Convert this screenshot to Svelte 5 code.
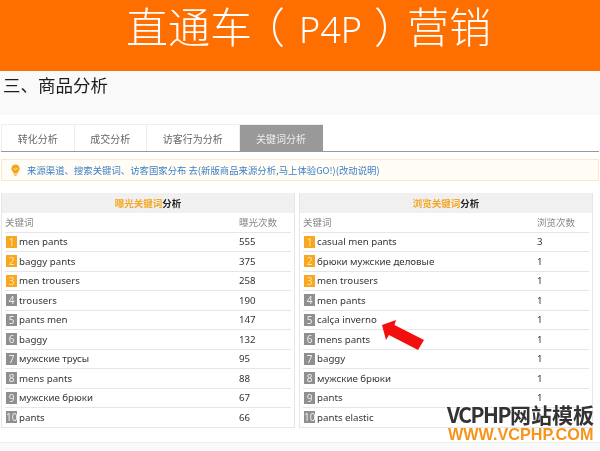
<script>
  const tabs = ['转化分析', '成交分析', '访客行为分析', '关键词分析'];

  const tables = [
    {
      accent: '曝光关键词',
      metric: '曝光次数',
      rows: [
        ['men pants', 555], ['baggy pants', 375], ['men trousers', 258], ['trousers', 190], ['pants men', 147],
        ['baggy', 132], ['мужские трусы', 95], ['mens pants', 88], ['мужские брюки', 67], ['pants', 66]
      ]
    },
    {
      accent: '浏览关键词',
      metric: '浏览次数',
      rows: [
        ['casual men pants', 3], ['брюки мужские деловые', 1], ['men trousers', 1], ['men pants', 1], ['calça inverno', 1],
        ['mens pants', 1], ['baggy', 1], ['мужские брюки', 1], ['pants', 1], ['pants elastic', 1]
      ]
    }
  ];
</script>

<div class="page">
  <header class="banner">直通车<span class="open">（</span><span class="p4p">P4P</span><span class="close">）</span>营销</header>

  <div class="section-title">三、商品分析</div>

  <nav class="tabs">
    {#each tabs as tab, i}
      <div class="tab" class:active={i === 3}>{tab}</div>
    {/each}
  </nav>

  <div class="notice">
    <svg width="9" height="12" viewBox="0 0 10 13">
      <path d="M5 0.5a4.5 4.5 0 0 1 2.6 8.2V10H2.4V8.7A4.5 4.5 0 0 1 5 0.5z" fill="#f8a51c"></path>
      <path d="M3.2 4.6 5 6.4 6.8 4.6" fill="none" stroke="#fff" stroke-width="1"></path>
      <path d="M3 11h4M3.8 12.4h2.4" stroke="#f8a51c" stroke-width="1"></path>
    </svg>
    <span>来源渠道、搜索关键词、访客国家分布 去(新版商品来源分析,马上体验GO!)(改动说明)</span>
  </div>

  <div class="tables">
    {#each tables as table}
      <section class="panel">
        <h3><em>{table.accent}</em>分析</h3>
        <div class="row head">
          <span>关键词</span>
          <span>{table.metric}</span>
        </div>
        {#each table.rows as row, i}
          <div class="row">
            <span class="name"><b class="rank" class:top={i < 3}>{i + 1}</b>{row[0]}</span>
            <span>{row[1]}</span>
          </div>
        {/each}
      </section>
    {/each}
  </div>

  <div class="footer-band"></div>

  <svg class="arrow" width="46" height="34" viewBox="0 0 46 34">
    <path d="M2 7 16 2 14.500 7 44 22 38 32 9 17 6 22z" fill="#f40f0f"></path>
  </svg>

  <div class="watermark">
    <div class="wm-top"><span>VCPHP</span>网站模板</div>
    <div class="wm-url">WWW.VCPHP.COM</div>
  </div>
</div>

<style>
  :global(body) {
    margin: 0;
  }

  .page {
    position: relative;
    width: 600px;
    height: 451px;
    overflow: hidden;
    background: #fff;
    font-family: "Noto Sans", "Noto Sans CJK SC", sans-serif;
    filter: blur(0.35px);
  }

  .banner {
    height: 71px;
    padding-left: 126px;
    box-sizing: border-box;
    background: #ff6f00;
    color: #fff;
    font-family: "Noto Sans CJK SC", sans-serif;
    font-weight: 300;
    font-size: 42px;
    line-height: 50px;
    white-space: nowrap;
  }

  .open {
    margin: 0 9px 0 -9px;
  }

  .close {
    margin: 0 -9px 0 9px;
  }

  .p4p {
    margin: 0 3px 0 5px;
    font-family: "Noto Sans", sans-serif;
    font-size: 36px;
    font-weight: 300;
  }

  .section-title {
    height: 44px;
    padding-left: 3px;
    box-sizing: border-box;
    background: #f9f9f9;
    color: #1c1c1c;
    font-family: "Noto Sans CJK SC", sans-serif;
    font-size: 17.500px;
    line-height: 27px;
  }

  .tabs {
    display: flex;
    height: 27px;
    margin: 9px 1px 0;
    border-bottom: 1px solid #999;
    font-size: 10px;
    color: #666;
  }

  .tab {
    display: flex;
    align-items: center;
    padding: 0 15.750px;
    border: 1px solid #eee;
    border-bottom: 0;
    border-right: 0;
    font-family: "Noto Sans CJK SC", sans-serif;
  }

  .tab.active {
    padding: 0 16.500px;
    background: #999;
    color: #eee;
  }

  .notice {
    display: flex;
    align-items: center;
    gap: 7px;
    height: 22px;
    margin: 7px 1px 0;
    padding-left: 9px;
    background: #fffdf5;
    border: 1px solid #fae9c8;
    box-sizing: border-box;
    color: #3d7fc9;
    font-family: "Noto Sans CJK SC", sans-serif;
    font-size: 9.400px;
    white-space: nowrap;
  }

  .tables {
    display: flex;
    gap: 4px;
    margin: 12px 0 0 1px;
  }

  .panel {
    width: 294px;
    height: 234.500px;
    box-sizing: border-box;
    border: 1px solid #e6e6e6;
    border-top: 0;
    padding: 0 3px;
  }

  h3 {
    height: 20px;
    margin: 0 -3px;
    background: #f0f0f0;
    color: #222;
    font-family: "Noto Sans CJK SC", sans-serif;
    font-size: 9.500px;
    font-weight: 700;
    line-height: 20px;
    text-align: center;
  }

  h3 em {
    font-style: normal;
    color: #f5a623;
  }

  .row {
    display: flex;
    height: 19.500px;
    box-sizing: border-box;
    border-bottom: 1px solid #e6e6e6;
    align-items: center;
    font-size: 9.700px;
    color: #333;
  }

  .row > span:last-child {
    width: 52px;
  }

  .name {
    flex: 1;
    display: flex;
    align-items: center;
    gap: 2px;
    padding-left: 1px;
    white-space: nowrap;
  }

  .row.head {
    color: #888;
    font-family: "Noto Sans CJK SC", sans-serif;
    font-size: 9.500px;
    justify-content: space-between;
  }

  .rank {
    width: 11px;
    height: 12px;
    background: #8f8f8f;
    color: #eee;
    font-weight: 400;
    font-size: 10px;
    line-height: 12px;
    text-align: center;
  }

  .rank.top {
    background: #f7a81e;
    color: #fde3b0;
  }

  .footer-band {
    height: 10px;
    margin-top: 14px;
    background: #f9f9f9;
    border-top: 1px solid #eee;
  }

  .arrow {
    position: absolute;
    left: 380px;
    top: 318px;
  }

  .watermark {
    position: absolute;
    left: 447px;
    top: 402px;
    white-space: nowrap;
  }

  .wm-top {
    font-family: "Noto Sans CJK SC", sans-serif;
    font-weight: 700;
    font-size: 21px;
    line-height: 25px;
    color: #333;
  }

  .wm-top span {
    letter-spacing: -1.500px;
  }

  .wm-url {
    margin: -1px 0 0 1px;
    font-family: "Liberation Sans", sans-serif;
    font-weight: 700;
    font-size: 16.200px;
    line-height: 17px;
    color: #f7941d;
  }
</style>
